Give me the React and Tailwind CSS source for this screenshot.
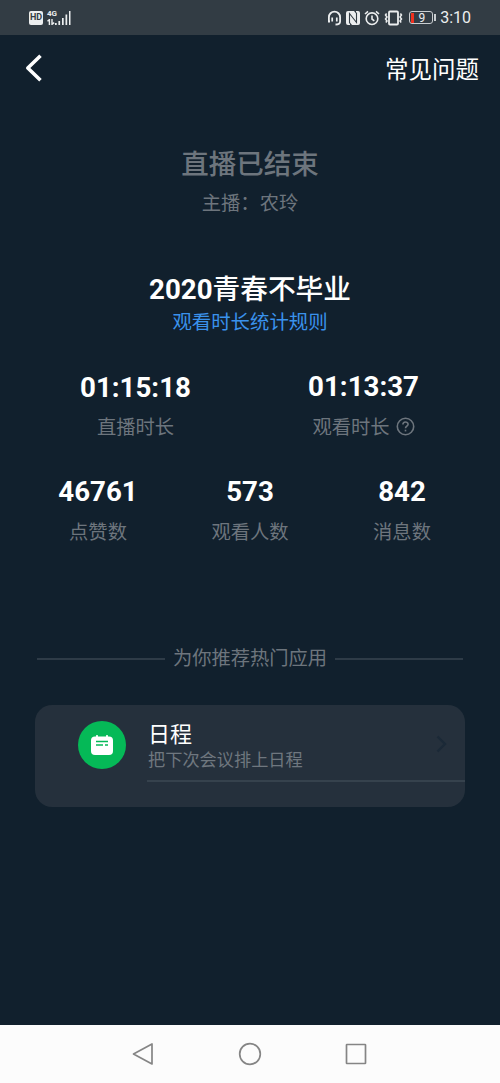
const totals = [
  { value: '46761', label: '点赞数' },
  { value: '573', label: '观看人数' },
  { value: '842', label: '消息数' },
];

export default function App() {
  return (
    <div className="flex h-[1083px] w-[500px] flex-col overflow-hidden bg-[#11202d] font-['Roboto','Noto_Sans_CJK_SC',sans-serif] text-white">
      <StatusBar />

      <header className="flex h-[66px] items-center justify-between pl-[25px] pr-[21px]">
        <svg className="h-[28px] w-[17px]" viewBox="0 0 17 28" fill="none" stroke="currentColor" strokeWidth="3.6">
          <path d="M15.5 1.8 2.8 14l12.7 12.2" strokeLinejoin="round" />
        </svg>
        <span className="pt-[4px] text-[23.5px] leading-8">常见问题</span>
      </header>

      <main className="flex flex-1 flex-col">
        <section className="mt-[44px] text-center text-[#6d757d]">
          <h1 className="text-[27.5px] font-medium leading-10">直播已结束</h1>
          <p className="text-[19.3px] leading-[38px]">主播：农玲</p>
        </section>

        <section className="mt-[47px] text-center">
          <h2 className="text-[27.7px] font-bold leading-10">
            2020<span className="font-medium">青春不毕业</span>
          </h2>
          <a className="block text-[19.4px] leading-[26px] text-[#3a92ec]">观看时长统计规则</a>
        </section>

        {/* Durations */}
        <section className="mt-[31px] flex justify-between pl-[80px] pr-[81px]">
          <Stat value="01:15:18" label="直播时长" valueClass="h-[42px] leading-[42px]" />
          <Stat value="01:13:37" label="观看时长" valueClass="h-[42px] leading-10" help />
        </section>

        {/* Totals */}
        <section className="mt-[25px] grid grid-cols-3 px-[22px]">
          {totals.map((t) => (
            <Stat key={t.label} value={t.value} label={t.label} valueClass="h-[42px] leading-10" />
          ))}
        </section>

        <div className="mt-[87px] flex h-[40px] items-center gap-2 px-[37px] text-[#6d757d]">
          <span className="h-[2px] flex-1 bg-[#2e3b47]" />
          <span className="text-[19.3px]">为你推荐热门应用</span>
          <span className="h-[2px] flex-1 bg-[#2e3b47]" />
        </div>

        <AppCard />
      </main>

      <NavBar />
    </div>
  );
}

function Stat({ value, label, help, valueClass }) {
  return (
    <div className="flex flex-col items-center">
      <span className={`text-[27.7px] font-bold ${valueClass}`}>{value}</span>
      <span className="flex h-[38px] items-center gap-[6px] text-[19.3px] text-[#6d757d]">
        {label}
        {help && (
          <svg className="mb-[3px] h-[19px] w-[19px]" viewBox="0 0 19 19" fill="none" stroke="currentColor" strokeWidth="1.6">
            <circle cx="9.5" cy="9.5" r="8.2" />
            <path d="M6.9 7.6c0-3.6 5.2-3.4 5.2-.3 0 1.8-2.6 2-2.6 4" />
            <path d="M9.5 12.7v1.7" />
          </svg>
        )}
      </span>
    </div>
  );
}

function AppCard() {
  return (
    <section className="mx-[35px] mt-[26px] flex h-[102px] rounded-[17px] bg-[#25303c]">
      <div className="ml-[43px] mt-[16px] flex h-12 w-12 shrink-0 items-center justify-center rounded-full bg-[#05b957]">
        <svg className="h-[20px] w-[22px]" viewBox="0 0 22 20">
          <rect x="0" y="1.5" width="22" height="18.5" rx="4" fill="#fff" />
          <path d="M6 .8v3M16 .8v3" stroke="#fff" strokeWidth="1.8" strokeLinecap="round" />
          <path d="M5 6.5h12M5 10h7M14 10h3" stroke="#05b957" strokeWidth="1.6" />
        </svg>
      </div>
      <div className="ml-[21px] flex h-[77px] flex-1 items-center justify-between border-b-2 border-[#36424d] pr-[18px]">
        <div className="pl-px pt-[7px]">
          <h3 className="text-[22px] leading-7">日程</h3>
          <p className="text-[17.2px] leading-[22px] text-[#6f777f]">把下次会议排上日程</p>
        </div>
        <svg className="mt-[3px] h-[18px] w-[11px]" viewBox="0 0 11 18" fill="none" stroke="#1b2937" strokeWidth="2.4">
          <path d="m1.5 1.5 7.5 7.5-7.5 7.5" />
        </svg>
      </div>
    </section>
  );
}

function StatusBar() {
  return (
    <div className="flex h-[35px] shrink-0 items-center bg-[#323c44] pl-[29px] text-[#eceeef]">
      <span className="flex h-[14px] w-[14px] items-center justify-center rounded-[2px] bg-[#eceeef] text-[9px] font-bold text-[#323c44]">
        HD
      </span>
      {/* 4G signal */}
      <div className="ml-[4px] flex h-[16px] w-[9px] flex-col items-start">
        <span className="text-[8px] font-bold leading-[8px]">4G</span>
        <svg className="mt-[1px] h-[6px] w-[9px]" viewBox="0 0 9 6" fill="none" stroke="currentColor" strokeWidth="1.4">
          <path d="M.5 2.3 2.4.6V6M5 0v5.4l2.2-1.8" />
        </svg>
      </div>
      <svg className="-ml-px h-[16px] w-[16px]" viewBox="0 0 16 16" fill="currentColor">
        <path d="M0 13h1.7v2H0zM3.4 11h1.7v4H3.4zM7 8h1.7v7H7zM10.5 4.5h1.7V15h-1.7zM14 1h1.5v14H14z" />
      </svg>

      <div className="ml-auto flex items-center pr-[29px]">
        <svg className="h-[16px] w-[15px]" viewBox="0 0 15 16" fill="none" stroke="currentColor" strokeWidth="1.8">
          <path d="M3 11.5H1.9V7.200a5.600 5.600 0 0 1 11.200 0v4.300c0 2-1.300 3-4.600 3" />
          <path d="M5.200 7.500v4M9.800 7.500v4" strokeWidth="1.700" />
        </svg>
        <svg className="ml-[3px] h-[16px] w-[16px]" viewBox="0 0 16 16">
          <rect x="1" y="1" width="14" height="14" rx="2" fill="currentColor" />
          <path d="M4.500 13.500V3.500l7 9v-10" fill="none" stroke="#323c44" strokeWidth="1.100" />
          <path d="M6.200 1h2.800l2 2.500V1M10 15H7l-2-2.500V15" fill="#323c44" />
        </svg>
        <svg className="ml-[3px] h-[16px] w-[16px]" viewBox="0 0 16 16" fill="none" stroke="currentColor" strokeWidth="1.6">
          <circle cx="8" cy="8.700" r="5.800" />
          <path d="M8 5.500v3.500l2.300 1.800M1 4l3-2.700M15 4l-3-2.700" />
        </svg>
        <svg className="ml-[4px] h-[16px] w-[19px]" viewBox="0 0 19 16" fill="none" stroke="currentColor" strokeWidth="1.8">
          <rect x="5" y="1.500" width="9" height="13" rx="1" />
          <path d="M2.600 3.500 1.500 5l1.500 2-1.500 2 1.500 2-1.200 1.500M16.400 3.500 17.500 5 16 7l1.500 2-1.500 2 1.200 1.500" strokeWidth="1.500" />
        </svg>
        {/* Battery */}
        <div className="ml-[6px] flex h-[13px] w-[24px] items-center rounded-[3px] border border-[#c9cdd0] pl-px">
          <span className="h-[10px] w-[2.500px] bg-[#f0301f]" />
          <span className="flex-1 pr-[2px] text-center text-[12px] leading-none">9</span>
        </div>
        <span className="ml-px h-[7px] w-[2px] bg-[#c9cdd0]" />
        <span className="ml-[4px] text-[16px] leading-5">3:10</span>
      </div>
    </div>
  );
}

function NavBar() {
  return (
    <nav className="flex h-[58px] shrink-0 items-center justify-between bg-[#fcfcfc] pl-[132px] pr-[133px] text-[#858585]">
      <svg className="h-[24px] w-[22px]" viewBox="0 0 22 24" fill="none" stroke="currentColor" strokeWidth="1.7">
        <path d="M20 2v20L1.500 12Z" strokeLinejoin="round" />
      </svg>
      <svg className="h-[24px] w-[24px]" viewBox="0 0 24 24" fill="none" stroke="currentColor" strokeWidth="1.7">
        <circle cx="12" cy="12" r="10.300" />
      </svg>
      <svg className="h-[22px] w-[22px]" viewBox="0 0 22 22" fill="none" stroke="currentColor" strokeWidth="1.7">
        <rect x="1.500" y="1.500" width="19" height="19" rx=".5" />
      </svg>
    </nav>
  );
}
